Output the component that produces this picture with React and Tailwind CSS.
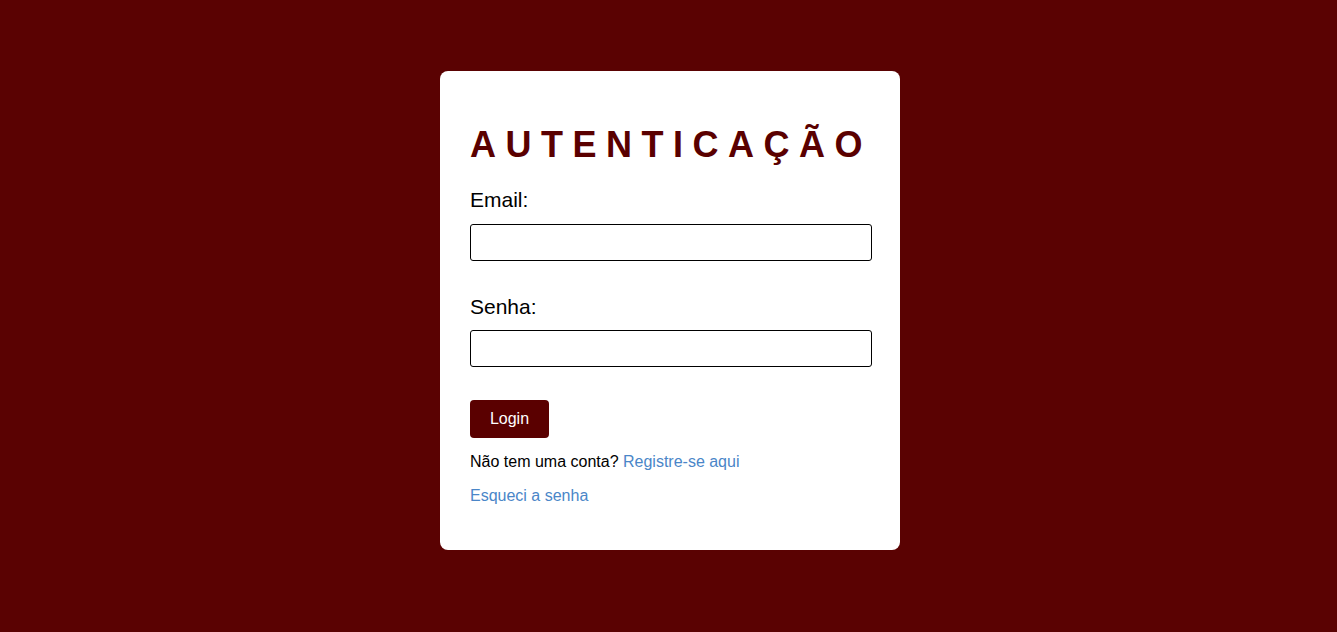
export default function App() {
  return (
    <div
      className="min-h-screen w-full bg-[#5a0202] flex justify-center pt-[71px] pl-[3px]"
      style={{ fontFamily: '"Liberation Sans", Arial, sans-serif' }}
    >
      <div className="w-[460px] h-[479px] bg-white rounded-[8px] px-[30px] pt-[30px] flex flex-col items-start">
        <h1 className="mt-[23px] text-[36px] leading-[41px] font-bold tracking-[9.5px] text-[#5a0000]">
          AUTENTICAÇÃO
        </h1>
        <label className="mt-[23px] text-[21px] leading-[24px] text-black">Email:</label>
        <input
          type="email"
          className="mt-[12px] w-[402px] h-[37px] border border-black rounded-[3px] px-2 outline-none"
        />
        <label className="mt-[34px] text-[21px] leading-[24px] text-black">Senha:</label>
        <input
          type="password"
          className="mt-[11px] w-[402px] h-[37px] border border-black rounded-[3px] px-2 outline-none"
        />
        <button className="mt-[33px] w-[79px] h-[38px] bg-[#5a0000] text-white text-[16px] leading-[18px] rounded-[4px]">
          Login
        </button>
        <p className="mt-[15px] text-[16px] leading-[18px] text-black">
          Não tem uma conta? <a className="text-[#4a86c8]">Registre-se aqui</a>
        </p>
        <a className="mt-[16px] text-[16px] leading-[18px] text-[#4a86c8]">Esqueci a senha</a>
      </div>
    </div>
  );
}
